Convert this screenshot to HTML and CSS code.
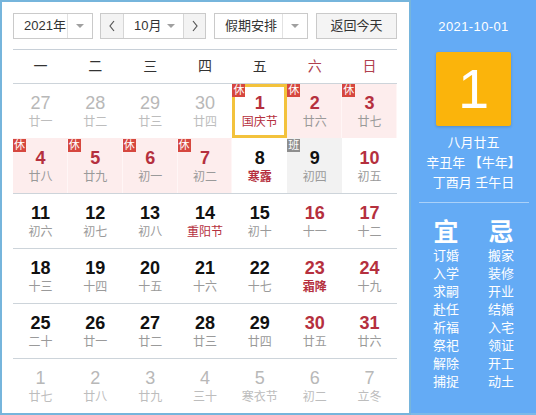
FILE: index.html
```html
<!DOCTYPE html>
<html lang="zh-CN">
<head>
<meta charset="utf-8">
<title>万年历</title>
<link rel="stylesheet" href="styles.css">
</head>
<body>
<div class="app">
  <div class="main">
    <div class="toolbar">
      <div class="sel sel-year">
        <span class="sel-text">2021年</span>
        <span class="sel-arrow"><i class="tri"></i></span>
      </div>
      <div class="month">
        <span class="mbtn mbtn-prev"><svg width="8" height="12" viewBox="0 0 8 12"><polyline points="6,1 2,6 6,11" fill="none" stroke="#555" stroke-width="1.2"/></svg></span>
        <span class="mmid"><span class="mtext">10月</span><i class="tri"></i></span>
        <span class="mbtn mbtn-next"><svg width="8" height="12" viewBox="0 0 8 12"><polyline points="2,1 6,6 2,11" fill="none" stroke="#555" stroke-width="1.2"/></svg></span>
      </div>
      <div class="sel sel-holiday">
        <span class="sel-text">假期安排</span>
        <span class="sel-arrow"><i class="tri"></i></span>
      </div>
      <div class="today-btn">返回今天</div>
    </div>

    <div class="week">
      <span>一</span><span>二</span><span>三</span><span>四</span><span>五</span><span class="we">六</span><span class="we">日</span>
    </div>

    <div class="grid">
      <div class="cell other"><div class="num">27</div><div class="lun">廿一</div></div>
      <div class="cell other"><div class="num">28</div><div class="lun">廿二</div></div>
      <div class="cell other"><div class="num">29</div><div class="lun">廿三</div></div>
      <div class="cell other"><div class="num">30</div><div class="lun">廿四</div></div>
      <div class="cell today red"><span class="badge">休</span><div class="num">1</div><div class="lun fest">国庆节</div></div>
      <div class="cell rest red"><span class="badge">休</span><div class="num">2</div><div class="lun">廿六</div></div>
      <div class="cell rest red"><span class="badge">休</span><div class="num">3</div><div class="lun">廿七</div></div>

      <div class="cell rest red notop"><span class="badge">休</span><div class="num">4</div><div class="lun">廿八</div></div>
      <div class="cell rest red notop"><span class="badge">休</span><div class="num">5</div><div class="lun">廿九</div></div>
      <div class="cell rest red notop"><span class="badge">休</span><div class="num">6</div><div class="lun">初一</div></div>
      <div class="cell rest red notop"><span class="badge">休</span><div class="num">7</div><div class="lun">初二</div></div>
      <div class="cell notop"><div class="num">8</div><div class="lun term">寒露</div></div>
      <div class="cell work notop"><span class="badge badge-work">班</span><div class="num">9</div><div class="lun">初四</div></div>
      <div class="cell red notop"><div class="num">10</div><div class="lun">初五</div></div>

      <div class="cell"><div class="num">11</div><div class="lun">初六</div></div>
      <div class="cell"><div class="num">12</div><div class="lun">初七</div></div>
      <div class="cell"><div class="num">13</div><div class="lun">初八</div></div>
      <div class="cell"><div class="num">14</div><div class="lun fest">重阳节</div></div>
      <div class="cell"><div class="num">15</div><div class="lun">初十</div></div>
      <div class="cell red"><div class="num">16</div><div class="lun">十一</div></div>
      <div class="cell red"><div class="num">17</div><div class="lun">十二</div></div>

      <div class="cell"><div class="num">18</div><div class="lun">十三</div></div>
      <div class="cell"><div class="num">19</div><div class="lun">十四</div></div>
      <div class="cell"><div class="num">20</div><div class="lun">十五</div></div>
      <div class="cell"><div class="num">21</div><div class="lun">十六</div></div>
      <div class="cell"><div class="num">22</div><div class="lun">十七</div></div>
      <div class="cell red"><div class="num">23</div><div class="lun term">霜降</div></div>
      <div class="cell red"><div class="num">24</div><div class="lun">十九</div></div>

      <div class="cell"><div class="num">25</div><div class="lun">二十</div></div>
      <div class="cell"><div class="num">26</div><div class="lun">廿一</div></div>
      <div class="cell"><div class="num">27</div><div class="lun">廿二</div></div>
      <div class="cell"><div class="num">28</div><div class="lun">廿三</div></div>
      <div class="cell"><div class="num">29</div><div class="lun">廿四</div></div>
      <div class="cell red"><div class="num">30</div><div class="lun">廿五</div></div>
      <div class="cell red"><div class="num">31</div><div class="lun">廿六</div></div>

      <div class="cell other"><div class="num">1</div><div class="lun">廿七</div></div>
      <div class="cell other"><div class="num">2</div><div class="lun">廿八</div></div>
      <div class="cell other"><div class="num">3</div><div class="lun">廿九</div></div>
      <div class="cell other"><div class="num">4</div><div class="lun">三十</div></div>
      <div class="cell other"><div class="num">5</div><div class="lun">寒衣节</div></div>
      <div class="cell other"><div class="num">6</div><div class="lun">初二</div></div>
      <div class="cell other"><div class="num">7</div><div class="lun">立冬</div></div>
    </div>
  </div>

  <div class="side">
    <div class="side-date">2021-10-01</div>
    <div class="side-day">1</div>
    <div class="side-info">
      <div>八月廿五</div>
      <div>辛丑年 【牛年】</div>
      <div>丁酉月 壬午日</div>
    </div>
    <div class="side-line"></div>
    <div class="yiji">
      <div class="yiji-col">
        <div class="yiji-head">宜</div>
        <div>订婚</div><div>入学</div><div>求嗣</div><div>赴任</div><div>祈福</div><div>祭祀</div><div>解除</div><div>捕捉</div>
      </div>
      <div class="yiji-col">
        <div class="yiji-head">忌</div>
        <div>搬家</div><div>装修</div><div>开业</div><div>结婚</div><div>入宅</div><div>领证</div><div>开工</div><div>动土</div>
      </div>
    </div>
  </div>
</div>
</body>
</html>
```

FILE: styles.css
```css
html, body {
  margin: 0;
  padding: 0;
  background: #fff;
}

body {
  font-family: "Liberation Sans", "Noto Sans CJK SC", sans-serif;
  color: #333;
}

.app {
  display: flex;
  width: 536px;
  height: 415px;
  overflow: hidden;
}

.main {
  width: 411px;
  height: 415px;
  box-sizing: border-box;
  border: 2px solid #76b5dc;
  padding: 11px 12px 0 11px;
  background: #fff;
}

/* toolbar */
.toolbar {
  display: flex;
  height: 26px;
  margin-bottom: 10px;
}

.sel {
  display: flex;
  box-sizing: border-box;
  height: 26px;
  border: 1px solid #cacaca;
  background: #fff;
  font-size: 13px;
  line-height: 24px;
  color: #333;
}

.sel-year {
  width: 80px;
}

.sel-holiday {
  width: 94px;
  margin-left: 8px;
}

.sel-text {
  flex: 1;
  padding-left: 10px;
}

.sel-arrow {
  width: 24px;
  border-left: 1px solid #e2e2e2;
  display: flex;
  align-items: center;
  justify-content: center;
}

.tri {
  display: block;
  width: 0;
  height: 0;
  border-left: 4px solid transparent;
  border-right: 4px solid transparent;
  border-top: 4px solid #a0a0a0;
}

.month {
  display: flex;
  width: 106px;
  height: 26px;
  margin-left: 7px;
  box-sizing: border-box;
  border: 1px solid #cacaca;
  font-size: 13px;
  line-height: 24px;
}

.mbtn {
  width: 22px;
  background: #f3f3f3;
  display: flex;
  align-items: center;
  justify-content: center;
}

.mbtn-prev {
  border-right: 1px solid #d6d6d6;
}

.mbtn-next {
  border-left: 1px solid #d6d6d6;
  width: 21px;
}

.mmid {
  flex: 1;
  display: flex;
  align-items: center;
  padding-left: 10px;
  background: #fff;
}

.mtext {
  width: 33px;
}

.today-btn {
  width: 81px;
  height: 26px;
  margin-left: 8px;
  box-sizing: border-box;
  border: 1px solid #cacaca;
  background: #f4f4f4;
  font-size: 13px;
  line-height: 24px;
  text-align: center;
  color: #333;
}

/* week header */
.week {
  display: grid;
  grid-template-columns: repeat(7, 1fr);
  height: 34px;
  box-sizing: border-box;
  border-top: 1px solid #c8d0d8;
  font-size: 14px;
  line-height: 33px;
  text-align: center;
  color: #333;
}

.week .we {
  color: #b0404e;
}

/* day grid */
.grid {
  display: grid;
  grid-template-columns: repeat(7, 1fr);
  grid-auto-rows: 55px;
}

.cell {
  position: relative;
  box-sizing: border-box;
  border-top: 1px solid #cdd4da;
  padding-top: 9px;
  text-align: center;
}

.num {
  font-size: 18px;
  font-weight: bold;
  line-height: 20px;
  color: #111;
}

.lun {
  margin-top: 1px;
  font-size: 12px;
  line-height: 16px;
  color: #9a9a9a;
}

.red .num {
  color: #b5303e;
}

.fest, .term {
  color: #b5303e;
}

.term {
  font-weight: bold;
}

.other .num {
  font-weight: normal;
  color: #b8b8b8;
}

.other .lun {
  color: #bdbdbd;
}

.rest {
  background: #fdeded;
  box-shadow: inset -1px 0 0 #fff6f6;
}

.notop {
  border-top-color: transparent;
}

.work {
  background: #f2f2f2;
}

.today {
  background: #fff;
  box-shadow: inset 0 0 0 3px #f3c23c;
}

.badge {
  position: absolute;
  top: 0;
  left: 0;
  width: 13px;
  height: 13px;
  background: #d6473f;
  color: #fff;
  font-size: 11px;
  line-height: 13px;
  text-align: center;
}

.badge-work {
  background: #8e8e8e;
}

/* side panel */
.side {
  flex: 1;
  height: 415px;
  box-sizing: border-box;
  background: #64abf5;
  border-bottom: 2px solid #7ab9e8;
  color: #fff;
  display: flex;
  flex-direction: column;
  align-items: center;
  padding-top: 17px;
}

.side-date {
  font-size: 13px;
  line-height: 20px;
  letter-spacing: 0.4px;
}

.side-day {
  margin-top: 15px;
  width: 75px;
  height: 74px;
  background: #fbb40b;
  border-radius: 2px;
  box-shadow: 0 1px 3px rgba(0, 0, 0, 0.18);
  font-size: 56px;
  line-height: 74px;
  text-align: center;
  color: #fff;
}

.side-info {
  margin-top: 7px;
  font-size: 13px;
  line-height: 20px;
  text-align: center;
}

.side-line {
  margin-top: 9px;
  width: 110px;
  height: 1px;
  background: rgba(255, 255, 255, 0.45);
}

.yiji {
  margin-top: 14px;
  display: grid;
  grid-template-columns: 55px 55px;
  font-size: 13px;
  line-height: 18px;
  text-align: center;
}

.yiji-head {
  font-size: 25px;
  font-weight: bold;
  line-height: 30px;
}
```
